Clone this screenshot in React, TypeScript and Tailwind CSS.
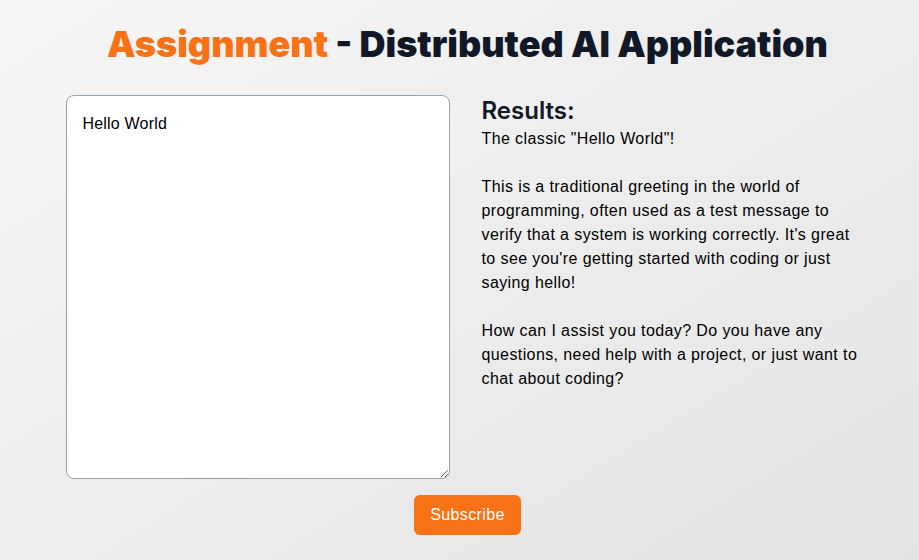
import { useState } from 'react'

const answer = `The classic "Hello World"!

This is a traditional greeting in the world of programming, often used as a test message to verify that a system is working correctly. It's great to see you're getting started with coding or just saying hello!

How can I assist you today? Do you have any questions, need help with a project, or just want to chat about coding?`

export default function App() {
  const [prompt, setPrompt] = useState('Hello World')

  return (
    <div className="min-h-[560px] bg-gradient-to-br from-[#f6f6f6] to-[#e4e4e4] pt-6 font-['Liberation_Sans',Arial,sans-serif]">
      <h1 className="pl-4 text-center text-4xl font-black text-[#111827] font-['Inter',sans-serif]">
        <span className="text-[#f97316]">Assignment</span> - Distributed AI Application
      </h1>

      <div className="mt-[31px] flex justify-center gap-8 pl-2">
        <textarea
          value={prompt}
          onChange={(e) => setPrompt(e.target.value)}
          className="h-96 w-96 rounded-lg border border-gray-400 bg-white p-4 text-base tracking-[0.2px] text-black outline-none"
        />
        <div className="w-[380px]">
          <h2 className="text-2xl font-semibold text-[#111827] font-['Inter',sans-serif]">Results:</h2>
          <p className="whitespace-pre-line text-base leading-6 tracking-[0.4px] text-black">{answer}</p>
        </div>
      </div>

      <div className="mt-4 flex justify-center pl-4">
        <button className="rounded-md bg-[#f97316] px-4 py-2 text-base tracking-[0.4px] text-white">Subscribe</button>
      </div>
    </div>
  )
}
